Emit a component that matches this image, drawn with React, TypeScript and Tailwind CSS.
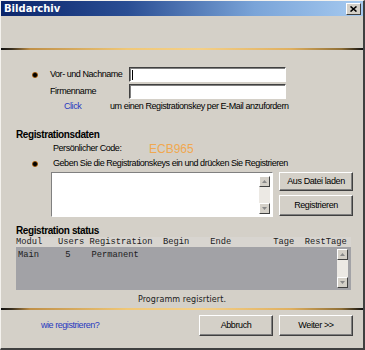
import React from "react";

const Bullet = () => (
  <div className="w-[6px] h-[6px] rounded-full bg-[radial-gradient(circle,#000_0%,#000_35%,#c07018_70%,#f0c080_100%)]" />
);

const Sep = () => (
  <div className="h-[2px] shrink-0 bg-[linear-gradient(to_right,#101010_0%,#3a3020_3%,#c09048_8%,#f0c878_35%,#f4d088_55%,#e0b060_80%,#907038_94%,#101010_100%)]" />
);

const ScrollBtn = ({ up }: { up: boolean }) => (
  <div className="w-[11px] h-[11px] bg-[#d4d0c8] border border-t-white border-l-white border-b-[#404040] border-r-[#404040] flex items-center justify-center shrink-0">
    <svg width="5" height="3" viewBox="0 0 5 3">
      {up ? <path d="M2.5 0 L5 3 L0 3 Z" fill="#888" /> : <path d="M0 0 L5 0 L2.5 3 Z" fill="#888" />}
    </svg>
  </div>
);

const ScrollBar = ({ cls }: { cls: string }) => (
  <div className={"w-[11px] flex flex-col justify-between bg-[#ece9e4] " + cls}>
    <ScrollBtn up={true} />
    <ScrollBtn up={false} />
  </div>
);

const Btn = ({ label, cls }: { label: string; cls: string }) => (
  <div
    className={
      "flex items-center justify-center bg-[#d4d0c8] border border-t-white border-l-white border-b-[#404040] border-r-[#404040] shadow-[inset_-1px_-1px_0_#808080] text-[9px] tracking-[-0.4px] " +
      cls
    }
  >
    {label}
  </div>
);

export default function App() {
  return (
    <div className="w-[365px] h-[350px] bg-[#d4d0c8] flex flex-col border-t border-l border-t-[#f4f2ee] border-l-[#f4f2ee] border-r-2 border-b-2 border-r-[#404040] border-b-[#404040] font-['Liberation_Sans',Arial,sans-serif] text-[9px] tracking-[-0.45px] text-black overflow-hidden">
      {/* title bar */}
      <div className="h-[15px] shrink-0 bg-[linear-gradient(to_right,#0a246a_0%,#2a4e94_35%,#7aa4d8_70%,#a6caf0_100%)] flex items-center justify-between pl-[3px] pr-[2px]">
        <span className="text-white font-bold text-[10px] tracking-[0px] font-['DejaVu_Sans',sans-serif] leading-none">Bildarchiv</span>
        <div className="w-[15px] h-[12px] bg-[#d4d0c8] border border-t-white border-l-white border-b-[#404040] border-r-[#404040] flex items-center justify-center">
          <svg width="7" height="6" viewBox="0 0 7 6">
            <path d="M0.5 0.5 L6.5 5.5 M6.5 0.5 L0.5 5.5" stroke="#000" strokeWidth="1.6" />
          </svg>
        </div>
      </div>

      <div className="h-[32px] shrink-0" />
      <Sep />

      {/* form */}
      <div className="mt-[17px] h-[15px] flex items-center shrink-0">
        <div className="w-[49px] pl-[31px] flex items-center">
          <Bullet />
        </div>
        <span className="w-[79px]">Vor- und Nachname</span>
        <div className="w-[157px] h-[15px] bg-white border border-t-[#404040] border-l-[#404040] border-b-white border-r-white shadow-[inset_1px_1px_0_#808080] flex items-center pl-[2px]">
          <div className="w-[1px] h-[10px] bg-black" />
        </div>
      </div>
      <div className="mt-[2px] h-[15px] flex items-center shrink-0">
        <span className="w-[79px] ml-[49px]">Firmenname</span>
        <div className="w-[157px] h-[15px] bg-white border border-t-[#404040] border-l-[#404040] border-b-white border-r-white shadow-[inset_1px_1px_0_#808080]" />
      </div>
      <div className="mt-[2px] h-[12px] flex items-center shrink-0">
        <span className="ml-[63px] w-[46px] text-[#2838c0]">Click</span>
        <span>um einen Registrationskey per E-Mail anzufordern</span>
      </div>

      {/* Registrationsdaten */}
      <div className="mt-[15px] h-[12px] flex items-center shrink-0 pl-[15px] font-bold text-[10px] tracking-[-0.4px]">
        Registrationsdaten
      </div>
      <div className="mt-[2px] h-[14px] flex items-center shrink-0 pl-[52px]">
        <span className="w-[96px]">Persönlicher Code:</span>
        <span className="text-[#f0a850] text-[12px] tracking-[0px]">ECB965</span>
      </div>
      <div className="mt-[2px] h-[12px] flex items-center shrink-0">
        <div className="w-[52px] pl-[31px] flex items-center">
          <Bullet />
        </div>
        <span>Geben Sie die Registrationskeys ein und drücken Sie Registrieren</span>
      </div>
      <div className="mt-[2px] h-[45px] flex shrink-0 pl-[50px]">
        <div className="w-[222px] h-[45px] bg-white border border-t-[#808080] border-l-[#808080] border-b-white border-r-white flex justify-end pt-[3px] pb-[2px] pr-[2px]">
          <ScrollBar cls="h-full" />
        </div>
        <div className="ml-[6px] w-[74px] flex flex-col gap-[4px]">
          <Btn label="Aus Datei laden" cls="h-[19px]" />
          <Btn label="Registrieren" cls="h-[21px] border-b-[#202020] border-r-[#202020]" />
        </div>
      </div>

      {/* Registration status */}
      <div className="mt-[7px] h-[12px] flex items-center shrink-0 pl-[15px] font-bold text-[10px] tracking-[-0.4px]">
        Registration status
      </div>
      <div className="mt-[1px] ml-[15px] w-[335px] h-[53px] flex flex-col shrink-0 font-['Liberation_Mono',monospace] text-[8.75px] tracking-[0px] text-[#202020]">
        <div className="h-[10px] bg-[#d8d5d0] whitespace-pre leading-[10px]">
          {"Modul   Users Registration  Begin    Ende        Tage  RestTage"}
        </div>
        <div className="flex-1 bg-[#a2a2a6] flex">
          <div className="flex-1 whitespace-pre leading-[10px] pt-[3px] pl-[2px]">{"Main     5    Permanent"}</div>
          <ScrollBar cls="mr-[3px] my-[2px]" />
        </div>
      </div>
      <div className="mt-[4px] h-[12px] flex items-center justify-center shrink-0 font-['DejaVu_Sans',sans-serif] text-[8px] tracking-[0.1px] text-[#202020]">
        Programm regisrtiert.
      </div>
      <div className="mt-[2px]">
        <Sep />
      </div>
      <div className="mt-[5px] h-[21px] flex items-center shrink-0">
        <span className="ml-[40px] w-[158px] text-[#2838c0]">wie registrieren?</span>
        <Btn label="Abbruch" cls="w-[74px] h-[21px]" />
        <Btn label="Weiter >>" cls="ml-[6px] w-[74px] h-[21px]" />
      </div>
    </div>
  );
}
